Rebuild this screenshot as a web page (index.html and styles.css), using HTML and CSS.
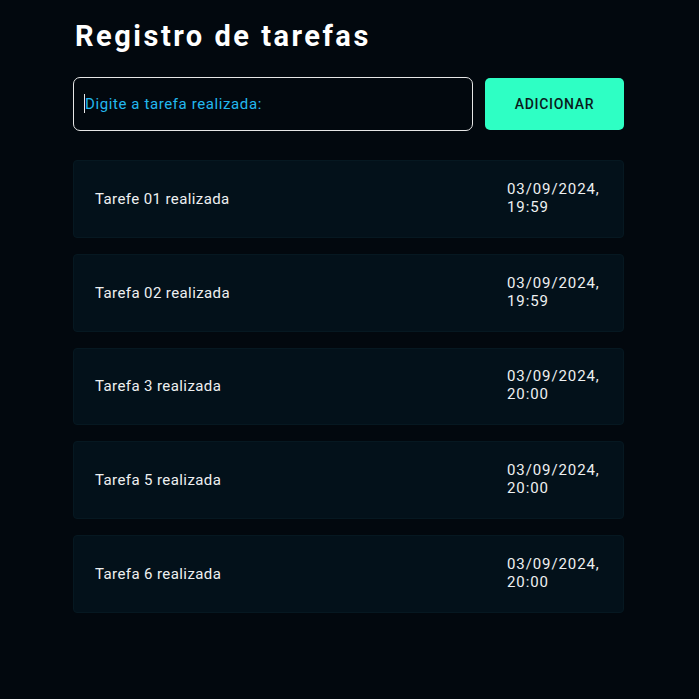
FILE: index.html
```html
<!DOCTYPE html>
<html lang="pt-BR">
<head>
<meta charset="utf-8">
<title>Registro de tarefas</title>
<link rel="stylesheet" href="styles.css">
</head>
<body>
<main class="app">
  <h1 class="title">Registro de tarefas</h1>
  <form class="form">
    <div class="field">
      <span class="caret"></span>
      <input class="input" type="text" placeholder="Digite a tarefa realizada:">
    </div>
    <button class="btn" type="button">ADICIONAR</button>
  </form>
  <ul class="list">
    <li class="card"><span class="name">Tarefe 01 realizada</span><span class="date">03/09/2024, 19:59</span></li>
    <li class="card"><span class="name">Tarefa 02 realizada</span><span class="date">03/09/2024, 19:59</span></li>
    <li class="card"><span class="name">Tarefa 3 realizada</span><span class="date">03/09/2024, 20:00</span></li>
    <li class="card"><span class="name">Tarefa 5 realizada</span><span class="date">03/09/2024, 20:00</span></li>
    <li class="card"><span class="name">Tarefa 6 realizada</span><span class="date">03/09/2024, 20:00</span></li>
  </ul>
</main>
</body>
</html>
```
FILE: styles.css
```css
html, body {
  margin: 0;
  padding: 0;
  background: #02080e;
}
body {
  font-family: Roboto, "Liberation Sans", sans-serif;
  color: #f2f4f5;
  padding-right: 2px;
}
.app {
  width: 551px;
  margin: 0 auto;
  padding-top: 17px;
}
.title {
  margin: 0 0 22px 2px;
  font-size: 29px;
  line-height: 38px;
  font-weight: 700;
  color: #ffffff;
  letter-spacing: 2.5px;
}
.form {
  display: flex;
  gap: 12px;
  margin: 0 0 29px 0;
}
.field {
  position: relative;
  flex: 0 0 400px;
}
.caret {
  position: absolute;
  left: 11px;
  top: 17px;
  width: 1px;
  height: 19px;
  background: #e8e8e8;
}
.input {
  box-sizing: border-box;
  width: 400px;
  height: 54px;
  padding: 0 11px;
  border: 1px solid #e6e6e6;
  border-radius: 7px;
  background: #02080e;
  color: #ffffff;
  font-family: inherit;
  font-size: 15px;
  letter-spacing: 0.6px;
  outline: none;
}
.input::placeholder {
  color: #22b8ee;
  opacity: 1;
}
.btn {
  flex: 1;
  height: 52px;
  margin-top: 1px;
  border: none;
  border-radius: 5px;
  background: #2effc4;
  color: #0a1b1c;
  font-family: inherit;
  font-size: 14px;
  font-weight: 500;
  letter-spacing: 0.7px;
}
.list {
  list-style: none;
  margin: 0;
  padding: 0;
  display: flex;
  flex-direction: column;
  gap: 16px;
}
.card {
  box-sizing: border-box;
  height: 77.8px;
  display: flex;
  align-items: center;
  justify-content: space-between;
  padding: 0 22px 0 21px;
  background: #03111a;
  border: 1px solid #061821;
  border-radius: 4px;
  font-size: 15px;
}
.name {
  color: #eef0f1;
  letter-spacing: 0.4px;
}
.date {
  width: 94px;
  line-height: 18px;
  color: #eef0f1;
  letter-spacing: 0.9px;
  margin-top: -2px;
}
```
